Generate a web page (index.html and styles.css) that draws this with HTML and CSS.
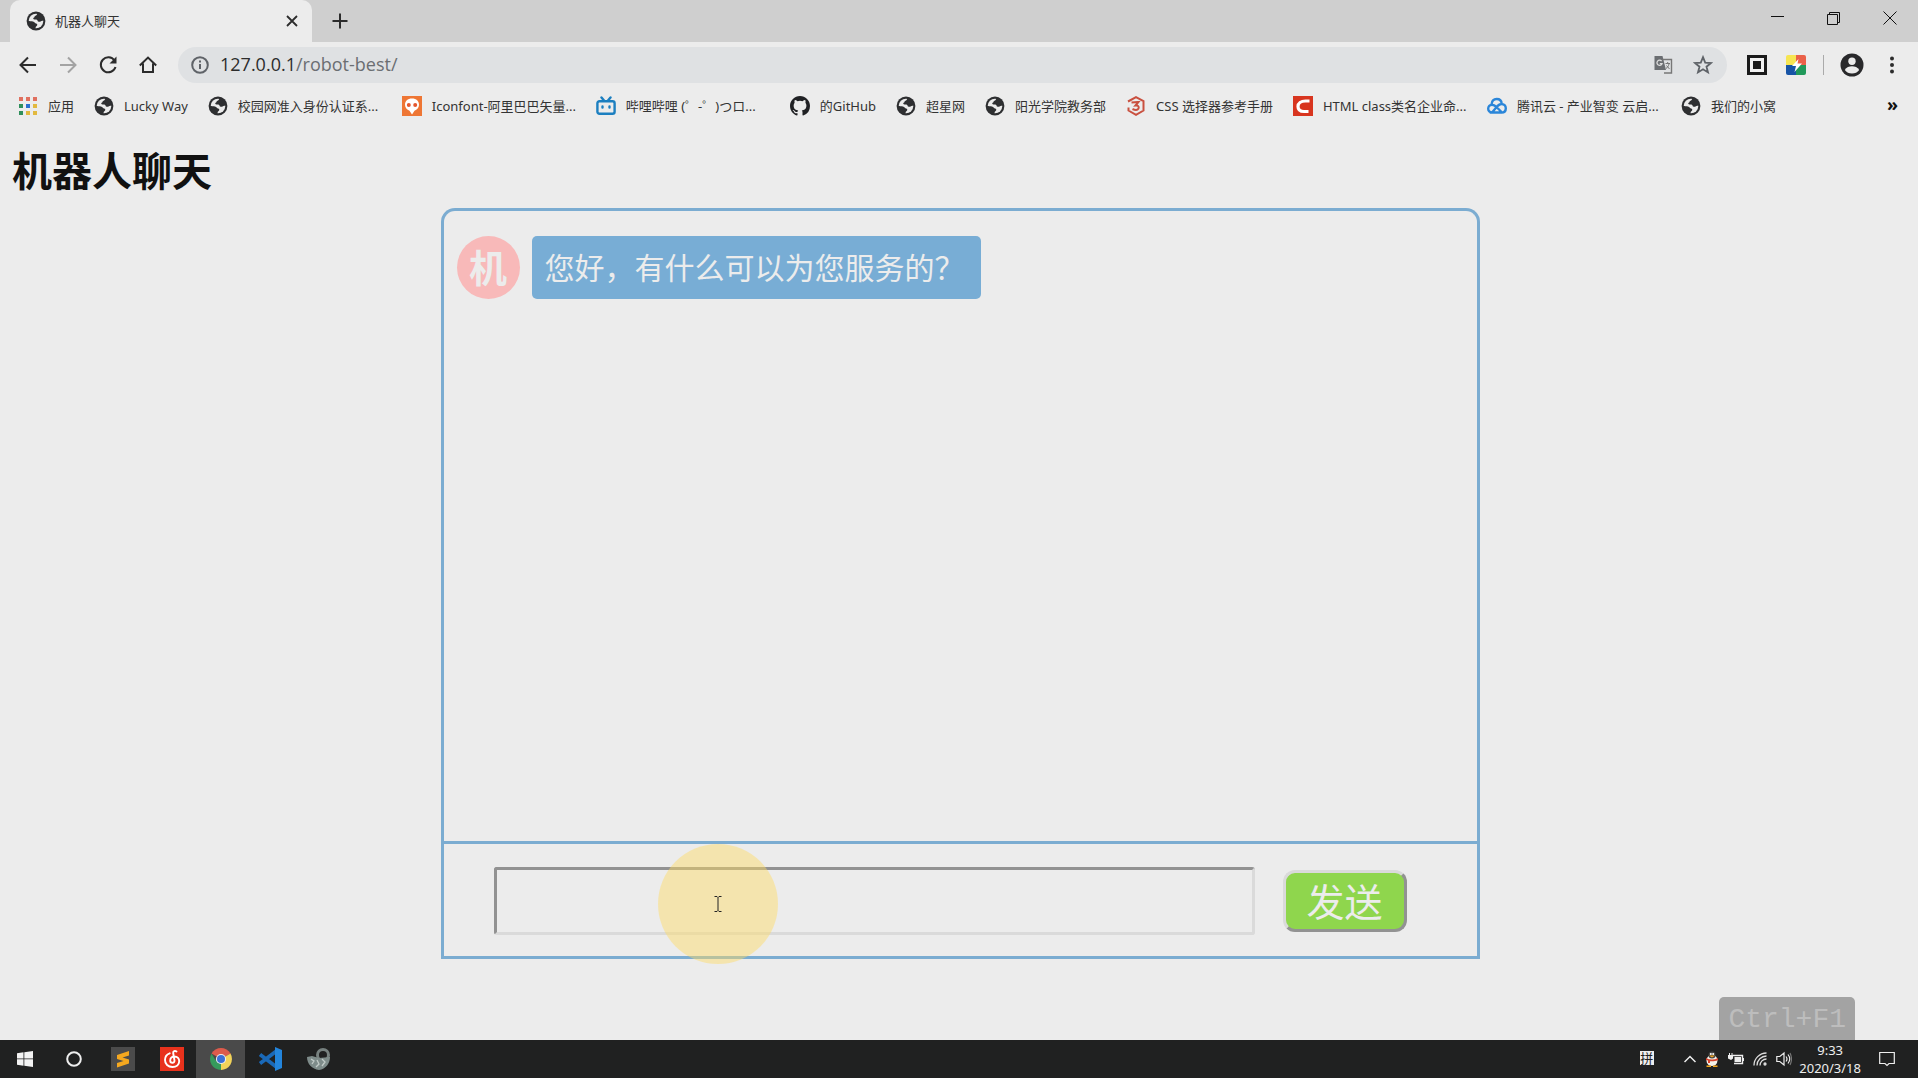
FILE: index.html
```html
<!DOCTYPE html>
<html lang="zh-CN">
<head>
<meta charset="utf-8">
<title>机器人聊天</title>
<link rel="stylesheet" href="styles.css">
</head>
<body>
<svg class="sprite" aria-hidden="true">
  <symbol id="globe" viewBox="0 0 20 20">
    <circle cx="10" cy="10" r="9.4" fill="#2e2f31"/>
    <circle cx="10" cy="10" r="7.300" fill="#ececec"/>
    <path fill="#2e2f31" d="M11.500 1.800c-.2 1.600-.6 2.300-2 2.900-1.300.5-.7 1.600-1.900 2.100-.9.600-.2 1.700.9 1.700 1.500-.1 2.600-.2 3 .9.300 1.200 1 1.500 2.300 1.400 1.200-.2 1.700-1.200 4.200-1.200C18 5 15 2 11.500 1.800z"/>
    <path fill="#2e2f31" d="M2 9.800c1.500.6 3.300.3 5 .8 1.500.5 1.900 1.700 3.200 2 1.500.4 1.400 1.900.2 2.600-1.100.7-.5 2-1.600 3C5 18 1.500 14 2 9.800z"/>
  </symbol>
</svg>
<div class="screen">
  <header class="titlebar">
    <div class="tab">
      <svg class="icon" viewBox="0 0 20 20"><use href="#globe"/></svg>
      <span class="tab-title">机器人聊天</span>
      <button class="plain" aria-label="关闭标签页"><svg class="icon-s" viewBox="0 0 12 12"><path d="M1 1l10 10M11 1L1 11" stroke="#2c2c2c" stroke-width="1.800"/></svg></button>
    </div>
    <button class="plain new-tab" aria-label="新标签页"><svg class="icon-m" viewBox="0 0 16 16"><path d="M8 .5v15M.5 8h15" stroke="#2c2c2c" stroke-width="2"/></svg></button>
    <div class="window-buttons">
      <button class="plain" aria-label="最小化"><svg class="icon-m" viewBox="0 0 16 16"><path d="M1 5.500h13" stroke="#111"/></svg></button>
      <button class="plain" aria-label="还原"><svg class="icon-m" viewBox="0 0 16 16" fill="none" stroke="#111"><path d="M1.500 3.500h10v10h-10zM3.500 3.500v-2h10v10h-2"/></svg></button>
      <button class="plain" aria-label="关闭"><svg class="icon-m" viewBox="0 0 16 16"><path d="M1.500 .5l13 13M14.500 .5l-13 13" stroke="#111"/></svg></button>
    </div>
  </header>

  <nav class="toolbar">
    <button class="plain" aria-label="后退"><svg class="icon" viewBox="0 0 20 20" fill="none" stroke="#2c2c2c" stroke-width="2"><path d="M18 10H3M10 2.500L2.500 10l7.500 7.500"/></svg></button>
    <button class="plain" aria-label="前进"><svg class="icon" viewBox="0 0 20 20" fill="none" stroke="#a3a3a3" stroke-width="2"><path d="M2 10h15M10 2.500l7.500 7.500-7.500 7.500"/></svg></button>
    <button class="plain" aria-label="刷新"><svg class="icon" viewBox="0 0 20 20"><path d="M16.500 5.500A7.500 7.500 0 1 0 17.500 12" fill="none" stroke="#2c2c2c" stroke-width="2"/><path d="M18.500 1.500v7h-7z" fill="#2c2c2c"/></svg></button>
    <button class="plain" aria-label="主页"><svg class="icon" viewBox="0 0 20 20" fill="none" stroke="#2c2c2c" stroke-width="2"><path d="M1.800 10.500L10 2.600l8.200 7.900M5 8.500V17h10V8.500"/></svg></button>
    <div class="omnibox">
      <svg class="icon" viewBox="0 0 20 20" fill="none" stroke="#5f6368" stroke-width="2"><circle cx="10" cy="10" r="7.800"/><path d="M10 9v5M10 5.500v2"/></svg>
      <span class="url"><span class="host">127.0.0.1</span>/robot-best/</span>
      <button class="plain" aria-label="翻译此页"><svg class="icon" viewBox="0 0 20 20"><path d="M1.500 1h8l3.500 14H1.500z" fill="#6b6e72"/><path d="M9.500 4.500h9v13.500h-7.500" fill="none" stroke="#777" stroke-width="1.400"/><path d="M8.600 6.200A2.600 2.600 0 1 0 9 8.700H6.800" fill="none" stroke="#ddd" stroke-width="1.300"/><path d="M12.500 8.500h4.500M14.700 7v1.500M16 9c-.5 2-1.500 3.500-3 4.500M13.500 10.500l3 3.500" fill="none" stroke="#777" stroke-width="1"/></svg></button>
      <button class="plain" aria-label="为此网页添加书签"><svg class="icon" viewBox="0 0 20 20"><path d="M10 2.200l2.200 5.400 5.800.4-4.500 3.700 1.500 5.700-5-3.100-5 3.100 1.500-5.700L2 8l5.800-.4z" fill="none" stroke="#5f6368" stroke-width="1.800"/></svg></button>
    </div>
    <div class="extensions">
      <svg class="icon" viewBox="0 0 20 20"><path d="M0 0h20v20H0z" fill="#1b1b1b"/><path d="M3 3h14v14H3z" fill="#f2f2f2"/><path d="M6 6h8v8H6z" fill="#1b1b1b"/></svg>
      <svg class="icon-l" viewBox="0 0 22 22"><path d="M3 1h8v10H1V3a2 2 0 0 1 2-2z" fill="#f6e552"/><path d="M11 1h8a2 2 0 0 1 2 2v8H11z" fill="#ea6149"/><path d="M1 11h10v10H3a2 2 0 0 1-2-2z" fill="#1754a6"/><path d="M11 11h10v8a2 2 0 0 1-2 2h-8z" fill="#20995a"/><path d="M13.500 5L7 12h4l-1.500 6 7.500-8.500h-4.500z" fill="#fff"/></svg>
      <span class="divider"></span>
      <svg class="icon-xl" viewBox="0 0 24 24"><circle cx="12" cy="12" r="11.500" fill="#29292b"/><circle cx="12" cy="8.300" r="3.700" fill="#ececec"/><path d="M4.800 17c1.500-2.800 4.500-3.700 7.200-3.700s5.700.9 7.200 3.700c-1.700 2.300-4.300 3.600-7.200 3.600S6.500 19.300 4.800 17z" fill="#ececec"/></svg>
      <svg class="icon" viewBox="0 0 20 20" fill="#2c2c2c"><circle cx="10" cy="3.500" r="2"/><circle cx="10" cy="10" r="2"/><circle cx="10" cy="16.500" r="2"/></svg>
    </div>
  </nav>

  <nav class="bookmarks">
    <a href="#"><svg class="icon" viewBox="0 0 20 20"><path fill="#e0705f" d="M1 1h4v4H1zM8 1h4v4H8zM15 1h4v4h-4z"/><path fill="#2f8f5b" d="M1 8h4v4H1zM1 15h4v4H1z"/><path fill="#2a6fd0" d="M8 8h4v4H8z"/><path fill="#e2b93f" d="M15 8h4v4h-4zM8 15h4v4H8zM15 15h4v4h-4z"/></svg>应用</a>
    <a href="#"><svg class="icon" viewBox="0 0 20 20"><use href="#globe"/></svg>Lucky Way</a>
    <a class="long" href="#"><svg class="icon" viewBox="0 0 20 20"><use href="#globe"/></svg>校园网准入身份认证系...</a>
    <a class="long" href="#"><svg class="icon" viewBox="0 0 20 20"><path fill="#ee7634" d="M0 0h20v20H0z"/><path fill="#fff" d="M10 2.500c4.500 0 7 2.700 7 6.200 0 3-2 4.800-4.500 6L10 18.500l-2.500-3.800c-2.500-1.200-4.500-3-4.500-6 0-3.500 2.500-6.200 7-6.200z"/><circle cx="6.800" cy="9" r="2" fill="#e4572e"/><circle cx="13.200" cy="9" r="2" fill="#e4572e"/></svg>Iconfont-阿里巴巴矢量...</a>
    <a class="long" href="#"><svg class="icon" viewBox="0 0 20 20" fill="none" stroke="#1c7fc0" stroke-width="2.400" stroke-linecap="round"><rect x="1.400" y="5.200" width="17.200" height="12.600" rx="2"/><path d="M5.500 1.500l2.500 3M14.500 1.500l-2.500 3M6.500 10.500v1M13.500 10.500v1"/></svg>哔哩哔哩 (゜-゜)つロ...</a>
    <a href="#"><svg class="icon" viewBox="0 0 16 16"><path fill="#202124" d="M8 0C3.580 0 0 3.580 0 8c0 3.540 2.290 6.530 5.470 7.590.4.070.55-.17.55-.38 0-.19-.01-.82-.01-1.490-2.010.37-2.530-.49-2.690-.94-.09-.23-.48-.94-.82-1.130-.28-.15-.68-.52-.01-.53.630-.01 1.080.58 1.230.82.720 1.210 1.870.87 2.330.66.070-.52.280-.87.510-1.070-1.780-.2-3.640-.89-3.640-3.950 0-.87.310-1.590.82-2.150-.08-.2-.36-1.020.08-2.120 0 0 .67-.21 2.200.82a7.600 7.600 0 0 1 4 0c1.530-1.040 2.200-.82 2.200-.82.440 1.100.160 1.920.080 2.120.510.560.820 1.270.820 2.150 0 3.070-1.870 3.750-3.650 3.950.290.250.540.730.540 1.480 0 1.070-.01 1.930-.01 2.200 0 .21.150.46.550.38A8 8 0 0 0 16 8c0-4.420-3.580-8-8-8z"/></svg>的GitHub</a>
    <a href="#"><svg class="icon" viewBox="0 0 20 20"><use href="#globe"/></svg>超星网</a>
    <a href="#"><svg class="icon" viewBox="0 0 20 20"><use href="#globe"/></svg>阳光学院教务部</a>
    <a href="#"><svg class="icon" viewBox="0 0 20 20" fill="none" stroke="#c9503f" stroke-width="2"><path d="M2 5.500L10 1.200l7.500 4v9.300L10 18.800l-7.500-4.300v-3M5.500 6.500l7-.5-3 3.500c2.500-.3 3.800 1 3 3-.8 1.500-3 2-6 .5"/></svg>CSS 选择器参考手册</a>
    <a class="long" href="#"><svg class="icon" viewBox="0 0 20 20"><path fill="#d8351f" d="M0 0h20v20H0z"/><path d="M16.500 5h-4C8 5 5 7 5 10.500 5 13.500 7 15.500 11 15.500h4.500" fill="none" stroke="#fff" stroke-width="3.200"/></svg>HTML class类名企业命...</a>
    <a class="long" href="#"><svg class="icon" viewBox="0 0 20 20" fill="none" stroke="#2b86d9" stroke-width="2.400"><path d="M5 16.500C2.700 16.500 1.200 15 1.200 12.800c0-2.300 1.600-4 3.800-4 2 0 3 .8 4.500 2.200l5.500 5.500M4.500 8.500C4.800 5 6.800 3 9.700 3c2.800 0 4.800 1.800 5 4.800M5 16.500h9.500c2.500 0 4.300-1.700 4.300-4.300 0-2.500-1.800-4.200-4.300-4.200-1.500 0-2.700.8-4 2z"/></svg>腾讯云 - 产业智变 云启...</a>
    <a href="#"><svg class="icon" viewBox="0 0 20 20"><use href="#globe"/></svg>我们的小窝</a>
    <button class="plain more" aria-label="更多书签">»</button>
  </nav>

  <main class="page">
    <h1>机器人聊天</h1>
    <section class="chat">
      <div class="log">
        <div class="message">
          <span class="avatar">机</span>
          <p class="bubble">您好，有什么可以为您服务的？</p>
        </div>
      </div>
      <form class="composer">
        <input class="entry" type="text" aria-label="消息">
        <button class="send" type="button">发送</button>
        <div class="pointer"><svg viewBox="0 0 10 18" fill="none" stroke="#222"><path d="M1.500 1.500h2.500l1 1 1-1h2.500M5 2.500v13M1.500 16.500h2.500l1-1 1 1h2.500"/></svg></div>
      </form>
    </section>
    <div class="key-hint">Ctrl+F1</div>
  </main>

  <footer class="taskbar">
    <button class="plain task" aria-label="开始"><svg class="icon-m" viewBox="0 0 16 16" fill="#f3f3f3"><path d="M0 2.200l6.500-.9v6.200H0zM7.300 1.200L16 0v7.500H7.300zM0 8.300h6.500v6.400L0 13.800zM7.300 8.300H16V16l-8.700-1.200z"/></svg></button>
    <button class="plain task" aria-label="搜索"><svg class="icon-m" viewBox="0 0 16 16"><circle cx="8" cy="8" r="6.800" fill="none" stroke="#eee" stroke-width="2"/></svg></button>
    <button class="plain task" aria-label="Sublime Text"><svg class="icon-xl" viewBox="0 0 24 24"><path fill="#4b4b4b" d="M0 0h24v24H0z"/><path fill="#f5a81f" d="M18 4v4.500l-6.500 2 6.500 2v4L6 20.500V16l6.500-2L6 12V8z"/></svg></button>
    <button class="plain task" aria-label="网易云音乐"><svg class="icon-xl" viewBox="0 0 24 24"><path fill="#e8321c" d="M0 0h24v24H0z"/><path d="M16.500 4.500c-1.500-1-3.500-.5-3.300 1.500l1.300 7.500c.2 3-4.300 3-4.300 0 0-2.500 2-4 4.300-4 3 0 4.700 2.200 4.700 4.800 0 3.500-3 5.700-6.700 5.700-4.500 0-7.500-3-7.500-7 0-3.300 2-5.800 4.700-6.700" fill="none" stroke="#fff" stroke-width="1.900" stroke-linecap="round"/></svg></button>
    <button class="plain task active" aria-label="Chrome"><svg class="icon-l" viewBox="0 0 22 22"><path fill="#dc5b4c" d="M11 11L1.500 5.500a11 11 0 0 1 19 0z"/><path fill="#f2d35a" d="M11 11l9.500-5.500A11 11 0 0 1 11 22z"/><path fill="#359b5c" d="M11 11v11A11 11 0 0 1 1.500 5.500l4.200 7z"/><path fill="#dc5b4c" d="M11 5.900h9.800l-.3-.4L11 3z"/><circle cx="11" cy="11" r="5.100" fill="#eee"/><circle cx="11" cy="11" r="4" fill="#3c6fd6"/></svg></button>
    <button class="plain task" aria-label="Visual Studio Code"><svg class="icon-xl" viewBox="0 0 24 24"><path d="M18.500 4L2 16.500M18.500 20L2 7.500" fill="none" stroke="#1a69b8" stroke-width="3.800"/><path d="M17 0l7 3v18l-7 3z" fill="#2385dc"/></svg></button>
    <button class="plain task" aria-label="录屏工具"><svg class="icon-xl" viewBox="0 0 24 24"><circle cx="16" cy="8" r="5.500" fill="none" stroke="#77817f" stroke-width="3"/><path d="M0 10l5-1 7 2 11-1c0 6-4 12-11 13C5 22 0 17 0 10z" fill="#7e8c8a"/><path d="M4 12l3 2-2 3M10 13l2 4-3 3M15 12l3 3-3 4" fill="none" stroke="#c2cbc8" stroke-width="1.300"/></svg></button>
    <div class="tray">
      <span class="ime">拼</span>
      <svg class="icon-s" viewBox="0 0 12 12"><path d="M.5 9L6 3.500 11.500 9" fill="none" stroke="#eee" stroke-width="1.500"/></svg>
      <svg class="icon-m" viewBox="0 0 16 16"><ellipse cx="8" cy="9.500" rx="5.500" ry="5.500" fill="#f4f1ea"/><circle cx="8" cy="4" r="3.500" fill="#444"/><circle cx="6.800" cy="3" r="1" fill="#fff"/><circle cx="9.200" cy="3" r="1" fill="#fff"/><path d="M5 4.500h6l-3 2zM2.500 14.500h4.500v1.500h-4.500zM9 14.500h4.500v1.500H9z" fill="#f3a51d"/><path d="M2 7c4 2 8 2 12 0v2c-3 1.500-6 1.500-8 1.200V12H4V9.500L2 9z" fill="#d7432c"/></svg>
      <svg class="icon-m" viewBox="0 0 16 16"><path d="M4.500 4.500h10v8h-8.500" fill="none" stroke="#eee" stroke-width="1.400"/><path d="M6.500 6h6.500v5h-6.500zM15 7h1v3h-1zM0 4h5v3.500l-2 1.500-3-1.500zM1 2h1v2H1zM3.500 2h1v2h-1z" fill="#eee"/></svg>
      <svg class="icon-m" viewBox="0 0 16 16" fill="none" stroke="#ddd" stroke-width="1.300"><path d="M2 14.500A12.500 12.500 0 0 1 14.500 2M5 14.500A9.500 9.500 0 0 1 14.500 5M8 14.500A6.500 6.500 0 0 1 14.500 8"/><circle cx="13" cy="13" r="1" fill="#ddd"/></svg>
      <svg class="icon-m" viewBox="0 0 16 16" fill="none" stroke="#eee" stroke-width="1.200"><path d="M.8 5.500h3L8 2v12l-4.200-3.500h-3zM10 5.500q2 2.500 0 5M12 3.500q3.500 4.500 0 9"/><path d="M14 2q3 6 0 12" stroke="#777"/></svg>
      <div class="clock"><time>9:33</time><time>2020/3/18</time></div>
      <svg class="icon-m" viewBox="0 0 16 16"><path d="M.7 1.500h14.600v11H10l-2 2-2-2H.7z" fill="none" stroke="#eee" stroke-width="1.200"/></svg>
    </div>
  </footer>
</div>
</body>
</html>
```
FILE: styles.css
```css
* { box-sizing: border-box; }

body {
  margin: 0;
  background: #ececec;
  color: #111;
  font-family: "Noto Sans", "Noto Sans CJK SC", sans-serif;
}

.sprite { position: absolute; width: 0; height: 0; }

svg { display: block; flex: none; }

.icon { width: 20px; height: 20px; }
.icon-s { width: 12px; height: 12px; }
.icon-m { width: 16px; height: 16px; }
.icon-l { width: 22px; height: 22px; }
.icon-xl { width: 24px; height: 24px; }

.plain {
  display: flex;
  align-items: center;
  justify-content: center;
  padding: 0;
  border: 0;
  background: none;
  color: inherit;
  font: inherit;
}

.screen {
  display: flex;
  flex-direction: column;
  min-height: 100vh;
}

/* Browser chrome */

.titlebar {
  display: flex;
  align-items: center;
  height: 42px;
  padding-left: 10px;
  background: #cfcfcf;
}

.tab {
  display: flex;
  align-items: center;
  gap: 9px;
  width: 302px;
  height: 42px;
  padding: 0 14px 0 16px;
  border-radius: 10px 10px 0 0;
  background: #ececec;
}

.tab-title {
  flex: 1;
  padding-bottom: 2px;
  color: #333;
  font-size: 13px;
}

.new-tab { margin-left: 20px; }

.window-buttons {
  display: flex;
  gap: 40px;
  margin-left: auto;
  padding: 0 20px 4px 0;
}

.toolbar {
  display: flex;
  align-items: center;
  gap: 20px;
  height: 46px;
  padding: 0 16px 0 18px;
}

.omnibox {
  display: flex;
  flex: 1;
  align-items: center;
  gap: 20px;
  height: 36px;
  padding: 0 14px 0 12px;
  border-radius: 18px;
  background: #dfe1e3;
}

.url {
  flex: 1;
  margin-left: -10px;
  color: #6b6e72;
  font-family: "Open Sans", sans-serif;
  font-size: 18px;
  line-height: 26px;
  padding-bottom: 2px;
}

.host { color: #2c2c2c; }

.extensions {
  display: flex;
  align-items: center;
  gap: 18px;
}

.divider {
  width: 1px;
  height: 20px;
  margin: 0 -2px;
  background: #aaa;
}

.bookmarks {
  display: flex;
  align-items: center;
  gap: 20px;
  height: 36px;
  padding: 0 20px 0 18px;
}

.bookmarks a {
  display: flex;
  flex: none;
  align-items: center;
  gap: 10px;
  color: #333;
  font-size: 13px;
  line-height: 18px;
  text-decoration: none;
  white-space: nowrap;
}

.bookmarks .long { width: 174px; }

.more {
  margin-left: auto;
  padding-bottom: 4px;
  font-size: 18px;
  font-weight: bold;
}

/* Page */

.page {
  position: relative;
  flex: 1;
  padding: 22px 10px 80px 12px;
}

h1 {
  margin: 0 0 12px;
  font-size: 40px;
  line-height: 50px;
}

.chat {
  max-width: 1039px;
  margin: 0 auto;
}

.log {
  min-height: 633px;
  padding: 25px 13px;
  border: 3px solid #7bacd1;
  border-bottom: 0;
  border-radius: 14px 14px 0 0;
}

.message {
  display: flex;
  align-items: center;
  gap: 12px;
}

.avatar {
  width: 63px;
  height: 63px;
  border-radius: 50%;
  background: #f8b9b9;
  color: #ececec;
  font-size: 38px;
  font-weight: bold;
  line-height: 63px;
  text-align: center;
}

.bubble {
  margin: 0;
  padding: 0 16px 0 13px;
  border-radius: 5px;
  background: #78add5;
  color: #ececec;
  font-size: 30px;
  line-height: 63px;
}

.composer {
  position: relative;
  display: flex;
  align-items: center;
  gap: 28px;
  min-height: 118px;
  padding: 2px 70px 0 50px;
  border: 3px solid #7bacd1;
}

.entry {
  flex: 1;
  height: 68px;
  border: 3px solid;
  border-color: #929292 #dadada #dadada #929292;
  border-radius: 3px;
  background: transparent;
  font-size: 38px;
}

.send {
  width: 124px;
  height: 62px;
  padding: 0;
  border: 3px solid;
  border-color: #dadada #929292 #929292 #dadada;
  border-radius: 12px;
  background: #8fd64d;
  color: #ececec;
  font-family: inherit;
  font-size: 38px;
  line-height: 56px;
}

/* Mouse highlight of the screen recorder */

.pointer {
  position: absolute;
  top: 0;
  left: 214px;
  display: grid;
  place-items: center;
  width: 120px;
  height: 120px;
  border-radius: 50%;
  background: rgba(255, 220, 100, 0.45);
}

.pointer svg { width: 10px; height: 18px; }

.key-hint {
  position: absolute;
  right: 63px;
  bottom: 0;
  padding: 2px 9px 0;
  border-radius: 5px 5px 0 0;
  background: #a3a3a3;
  color: #bdbdbd;
  font-family: "Liberation Mono", monospace;
  font-size: 28px;
  line-height: 41px;
}

/* Taskbar */

.taskbar {
  display: flex;
  align-items: center;
  height: 38px;
  background: #202121;
  color: #eee;
}

.task {
  width: 49px;
  height: 38px;
}

.active { background: #4a4a4a; }

.tray {
  display: flex;
  align-items: center;
  gap: 8px;
  margin-left: auto;
  padding-right: 23px;
}

.ime {
  width: 14px;
  margin: 0 22px 2px 0;
  background: #eee;
  color: #202121;
  font-size: 13px;
  line-height: 14px;
}

.clock {
  display: flex;
  flex-direction: column;
  align-items: center;
  margin: 0 10px 0 -1px;
  font-family: "Noto Sans", sans-serif;
  font-size: 13px;
  line-height: 18px;
}
```
